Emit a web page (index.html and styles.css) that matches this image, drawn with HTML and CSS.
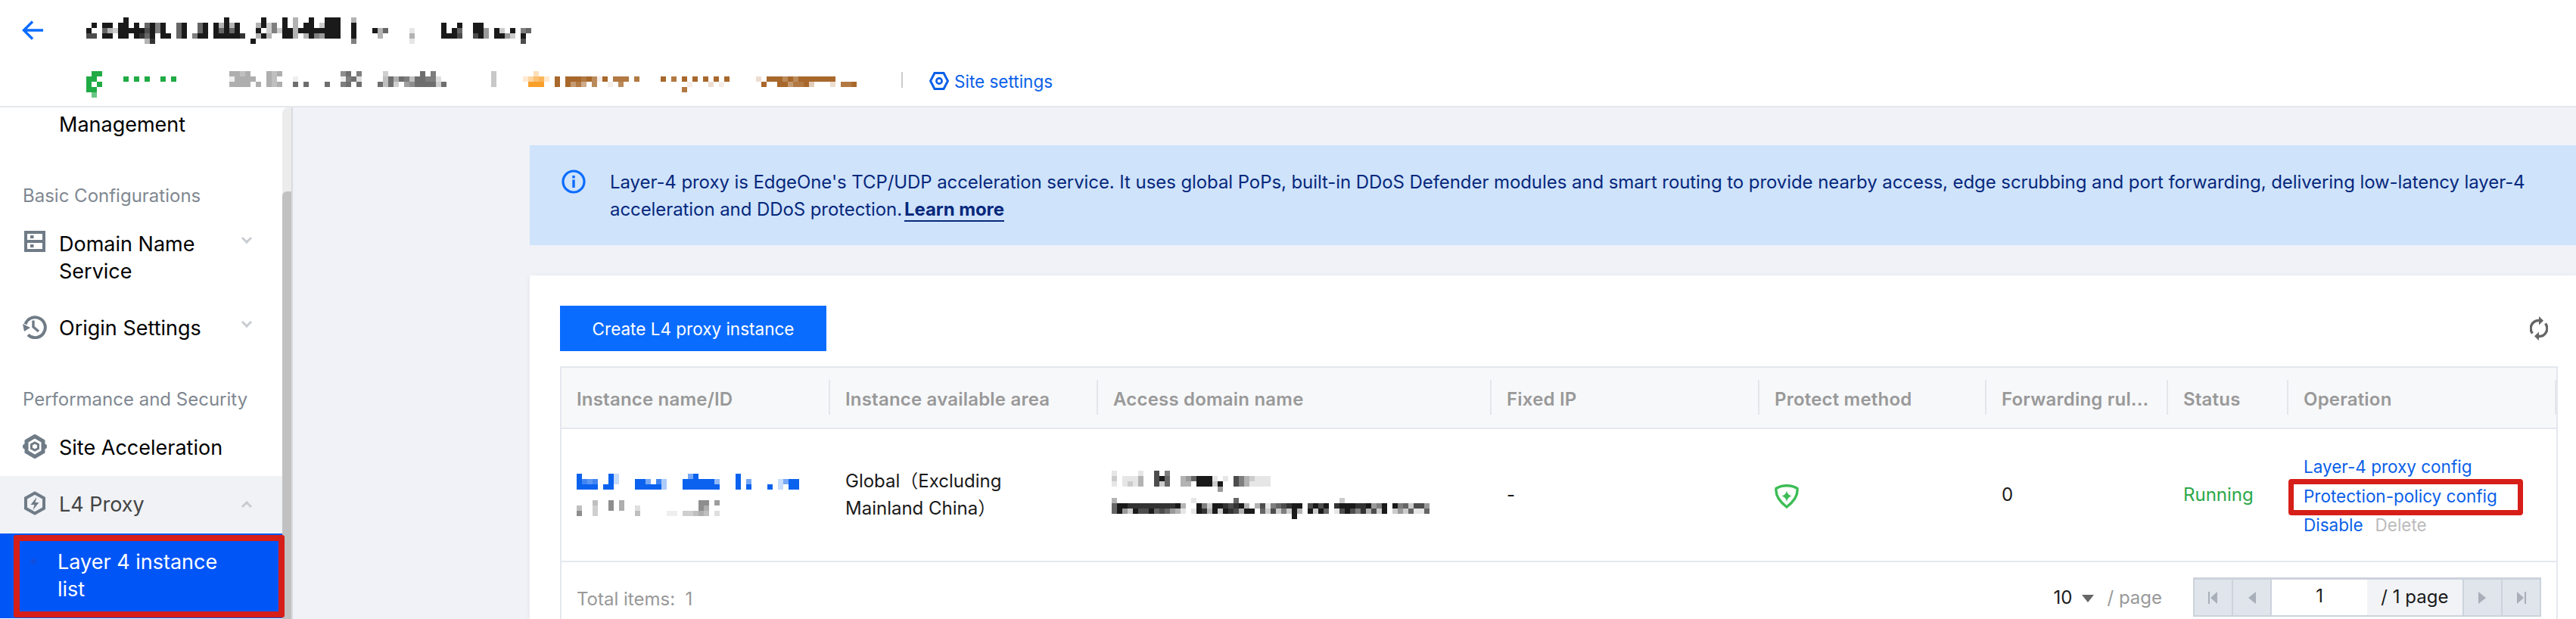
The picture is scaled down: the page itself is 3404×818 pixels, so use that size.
FILE: index.html
```html
<!DOCTYPE html>
<html lang="en">
<head>
    <meta charset="UTF-8">
    <meta name="viewport" content="width=device-width, initial-scale=1.0">
    <title>L4 Proxy</title>
    <link rel="stylesheet" href="styles.css">
</head>
<body>

<header class="topbar">
    <div class="title-row">
        <svg class="back-icon" viewBox="0 0 28 26" width="28" height="26"><path d="M28 13H3M14 1.5 2.5 13 14 24.5" fill="none" stroke="#0a6cff" stroke-width="3.4"/></svg>
        <div class="mosaic mosaic-dark" data-rows=".......9..................9......9...9.3..9.|.9.99.99.9.6959..69..69.93939...3925.9.3.99.|9..632999997959..69..69.96969...9.2529939999|77.99.99.9869.99.69.599.999998..393..993.395|...........38..................9"></div>
        <div class="mosaic mosaic-dark" data-rows=".999..3|2999..9................9..9..99|9999..9...936....1.....9.96..994.92.9.56|4999..9....3.....3.....9997..794.9942.9|......5..........1....................7"></div>
    </div>
    <div class="site-row">
        <div class="mosaic mosaic-green" data-rows=".99|99.....9.9.9..9.9|9.9|99|.6"></div>
        <div class="mosaic mosaic-gray" data-rows="5545...545...........79.8....3......9.8|15555..54...1........1892....49598499882|5555.5.545..9.9...9..89.9...9493.67999939"></div>
        <span class="mosaic-sep"></span>
        <div class="mosaic mosaic-orange" data-rows="..3..|24672|.999."></div>
        <div class="mosaic mosaic-brown" data-rows=".|9.99989719.888.8....9.8.9.9.9.9.9.....2.9997979999999|9.9685.7..1.7............1...2.1.......9..9968893...2.889|........................8"></div>
        <span class="site-sep"></span>
        <a class="site-link">
            <svg viewBox="0 0 26 24" width="26" height="24"><path d="M7 1.5h12L24.5 12 19 22.5H7L1.5 12z" fill="none" stroke="#0a5fe8" stroke-width="3"/><circle cx="13" cy="12" r="3.6" fill="none" stroke="#0a5fe8" stroke-width="2.6"/></svg>
            Site settings
        </a>
    </div>
</header>

<div class="layout">
    <aside class="sidebar">
        <nav class="side-nav">
            <div class="nav-item nav-first"><span class="nav-text">Management</span></div>

            <div class="nav-group">Basic Configurations</div>
            <div class="nav-item">
                <svg class="nav-icon" viewBox="0 0 28 28" width="28" height="28"><path fill-rule="evenodd" d="M0 0h28v28H0zM4 4v8h20V4zM4 16v8h20v-8z"/><path d="M8 6h4.5v4H8zM8 18h4.5v4H8z"/></svg>
                <span class="nav-text">Domain Name Service</span>
                <span class="chevron"></span>
            </div>
            <div class="nav-item">
                <svg class="nav-icon" viewBox="0 0 32 32" width="32" height="32"><path d="M3.5 12.5A13.5 13.5 0 1 1 7 26.5" fill="none" stroke="#6f7b86" stroke-width="4"/><path d="M0 12l10 5-8 5z"/><path d="M14 7.5V16l7 6" fill="none" stroke="#6f7b86" stroke-width="3.4"/></svg>
                <span class="nav-text">Origin Settings</span>
                <span class="chevron"></span>
            </div>

            <div class="nav-group">Performance and Security</div>
            <div class="nav-item">
                <svg class="nav-icon" viewBox="0 0 32 32" width="32" height="32"><path d="M16 2.5 27 9v14l-11 6.5L5 23V9z" fill="none" stroke="#6f7b86" stroke-width="5"/><path d="M16 11l4.5 2.5v5L16 21l-4.5-2.5v-5z" fill="none" stroke="#6f7b86" stroke-width="3"/><circle cx="3.5" cy="16" r="3.5"/><circle cx="28.5" cy="16" r="3.5"/></svg>
                <span class="nav-text">Site Acceleration</span>
            </div>
            <div class="nav-item nav-open">
                <svg class="nav-icon" viewBox="0 0 28 32" width="28" height="32"><path d="M14 2.5 26 9.200v13.600L14 29.500 2 22.800V9.200z" fill="none" stroke="#6f7b86" stroke-width="4"/><path d="M16.500 8 8.500 18h5l-2 7 8-10h-5z"/></svg>
                <span class="nav-text">L4 Proxy</span>
                <span class="chevron chevron-up"></span>
            </div>
            <div class="nav-sub">
                <span class="nav-dot"></span>
                <span class="nav-text">Layer 4 instance list</span>
                <span class="red-box"></span>
            </div>
        </nav>
        <div class="scrollbar"><div class="scroll-thumb"></div></div>
    </aside>

    <main class="content">
        <div class="banner">
            <svg class="banner-icon" viewBox="0 0 32 32" width="32" height="32"><circle cx="16" cy="16" r="14" fill="none" stroke="#0a6cff" stroke-width="3.2"/><path d="M14.300 13.500h3.400V24h-3.400zM14.300 8h3.400v3.400h-3.400z" fill="#0a6cff"/></svg>
            <p class="banner-text">Layer-4 proxy is EdgeOne's TCP/UDP acceleration service. It uses global PoPs, built-in DDoS Defender modules and smart routing to provide nearby access, edge scrubbing and port forwarding, delivering low-latency layer-4 acceleration and DDoS protection.<a class="banner-link">Learn more</a></p>
        </div>

        <section class="card">
            <div class="toolbar">
                <button class="btn-primary">Create L4 proxy instance</button>
                <svg class="refresh" viewBox="0 0 24 32" width="24" height="32"><path d="M3.500 22.500A10.500 10.500 0 0 1 12 5.500M20.500 9.500A10.500 10.500 0 0 1 12 26.500" fill="none" stroke="#666" stroke-width="3.4"/><path d="M12 0l6 5.800-6 5.700zM12 20.500l-6 5.800 6 5.700z" fill="#666"/></svg>
            </div>

            <div class="table-wrap">
                <table class="table">
                    <colgroup>
                        <col class="col-name"><col class="col-area"><col class="col-domain"><col class="col-ip">
                        <col class="col-protect"><col class="col-rules"><col class="col-status"><col class="col-ops">
                    </colgroup>
                    <thead>
                        <tr>
                            <th><div class="th-in">Instance name/ID</div></th>
                            <th><div class="th-in">Instance available area</div></th>
                            <th><div class="th-in">Access domain name</div></th>
                            <th><div class="th-in">Fixed IP</div></th>
                            <th><div class="th-in">Protect method</div></th>
                            <th><div class="th-in">Forwarding rul...</div></th>
                            <th><div class="th-in">Status</div></th>
                            <th><div class="th-in th-last">Operation</div></th>
                        </tr>
                    </thead>
                    <tbody>
                        <tr>
                            <td>
                                <div class="mosaic mosaic-blue mosaic-line" data-rows="9.....92.............59.......9|9767..92...995.73...9999994...9.5.....2599|9999.99....999993...9999999...9.9...9.2.99"></div>
                                <div class="mosaic mosaic-gray" data-rows="...4..7.5..............77.6|4..3..7.5..2...........75|7..3.......4.....11.33454.2"></div>
                            </td>
                            <td>Global（Excluding<br>Mainland China）</td>
                            <td class="cell-domain">
                                <div class="mosaic mosaic-dark mosaic-line-sm" data-rows="1....1..7.5|2.1113..796..3469991.1.7532111|1.1213..726..33.99929..7531111|....................4"></div>
                                <div class="mosaic mosaic-dark" data-rows="3..............1.......6...................2|69988888888893..9529987893.371567899.7979.8999889459.9562774|69429779676431.198392987399.62725293.9296.1797583729.2426116|..................................9"></div>
                            </td>
                            <td>-</td>
                            <td>
                                <svg class="shield" viewBox="0 0 32 32" width="32" height="32"><path d="M16 1.800Q24 1.800 30 5.500 31.500 18 16 30 .5 18 2 5.500 8 1.800 16 1.800z" fill="none" stroke="#3cbd55" stroke-width="3.4"/><path d="M16 8.500Q17 14 22.500 15.500 17 17 16 23 15 17 9.500 15.500 15 14 16 8.500z" fill="#3cbd55"/></svg>
                            </td>
                            <td>0</td>
                            <td class="status-run">Running</td>
                            <td class="cell-ops">
                                <a class="op-link">Layer-4 proxy config</a>
                                <a class="op-link op-marked">Protection-policy config<span class="red-box-op"></span></a>
                                <div><a class="op-link op-inline">Disable</a><span class="op-off">Delete</span></div>
                            </td>
                        </tr>
                    </tbody>
                </table>

                <div class="table-foot">
                    <span class="total">Total items:&nbsp; 1</span>
                    <div class="page-size"><span class="size-val">10</span><span class="caret"></span><span class="size-unit">/ page</span></div>
                    <div class="pager">
                        <span class="pg-btn"><svg viewBox="0 0 14 16" width="14" height="16"><path d="M0 0h2v16H0zM12 0v16L3 8z"/></svg></span>
                        <span class="pg-btn"><svg viewBox="0 0 10 16" width="10" height="16"><path d="M10 0v16L0 8z"/></svg></span>
                        <span class="pg-input">1</span>
                        <span class="pg-count">/ 1 page</span>
                        <span class="pg-btn"><svg viewBox="0 0 10 16" width="10" height="16"><path d="M0 0v16l10-8z"/></svg></span>
                        <span class="pg-btn"><svg viewBox="0 0 14 16" width="14" height="16"><path d="M2 0v16l9-8zM12 0h2v16h-2z"/></svg></span>
                    </div>
                </div>
            </div>
        </section>
    </main>
</div>

<script src="mosaic.js"></script>
</body>
</html>
```

FILE: styles.css
```css
/* Base */
html, body {
    height: 100%;
}

body {
    margin: 0;
    display: flex;
    flex-direction: column;
    overflow: hidden;
    font-family: Inter, "Noto Sans CJK SC", sans-serif;
    font-size: 24px;
    color: #1a1a1a;
    background-color: #f0f2f7;
}

/* Blurred-out text blocks */
.mosaic svg {
    display: block;
}

.mosaic-dark { fill: #1a1a1a; }
.mosaic-gray { fill: #6e6e6e; }
.mosaic-green { fill: #20ab45; }
.mosaic-orange { fill: #f9a02a; }
.mosaic-brown { fill: #a8682c; }
.mosaic-blue { fill: #0a62ee; }

/* Top bar */
.topbar {
    height: 140px;
    padding-top: 23px;
    box-sizing: border-box;
    flex-shrink: 0;
    background-color: #fff;
}

.title-row {
    display: flex;
    align-items: flex-start;
    height: 35px;
    padding-left: 29px;
}

.back-icon {
    margin: 4px 57px 0 0;
}

.site-row {
    display: flex;
    align-items: flex-start;
    margin-top: 36px;
    padding-left: 114px;
}

.site-row .mosaic-gray {
    margin-left: 70px;
}

.mosaic-sep {
    width: 7px;
    height: 21px;
    margin: 0 35px 0 59px;
    background-color: #c8c8c8;
}

.site-row .mosaic-brown {
    margin-left: 7px;
}

.site-sep {
    width: 2px;
    height: 21px;
    margin: 1px 35px 0 59px;
    background-color: #ccc;
}

.site-link {
    display: flex;
    align-items: center;
    gap: 7px;
    height: 26px;
    color: #0a5fe8;
    font-size: 22.5px;
}

/* Page body */
.layout {
    flex: 1;
    display: flex;
    min-height: 0;
    border-top: 2px solid #e4e7ec;
}

/* Sidebar */
.sidebar {
    display: flex;
    width: 387px;
    flex-shrink: 0;
    overflow: hidden;
    box-sizing: border-box;
    border-right: 2px solid #d8dbe0;
    background-color: #fff;
}

.side-nav {
    width: 373px;
    flex-shrink: 0;
    padding-top: 5px;
    box-sizing: border-box;
    font-size: 27px;
    line-height: 36px;
    color: #000;
}

.scrollbar {
    width: 12px;
    padding-top: 111px;
    box-sizing: border-box;
    border-top-left-radius: 8px;
    background-color: #ececec;
}

.scroll-thumb {
    height: 100%;
    border-radius: 6px 0 0 0;
    background-color: #c1c1c1;
}

.nav-item {
    display: flex;
    align-items: flex-start;
    padding: 20px 42px 20px 30px;
    fill: #6f7b86;
}

.nav-first {
    padding-top: 0;
    padding-left: 78px;
}

.nav-icon {
    width: 32px;
    margin-right: 16px;
    flex-shrink: 0;
}

.nav-text {
    flex: 1;
}

.nav-group {
    margin-top: 30px;
    padding-left: 30px;
    height: 52px;
    line-height: 52px;
    font-size: 24px;
    color: #7f8891;
}

.nav-group + .nav-item {
    margin-bottom: -1px;
}

.nav-open {
    color: #444;
    background-color: #f0f2f5;
}

.chevron {
    width: 7px;
    height: 7px;
    margin-top: 5px;
    border-right: 3px solid #c8ccd1;
    border-bottom: 3px solid #c8ccd1;
    transform: rotate(45deg);
}

.chevron-up {
    margin-top: 15px;
    transform: rotate(225deg);
}

.nav-sub {
    position: relative;
    display: flex;
    padding: 20px 70px 20px 76px;
    color: #fff;
    background-color: #0055f7;
}

.nav-dot {
    position: absolute;
    left: 40px;
    top: 33px;
    width: 8px;
    height: 8px;
    border-radius: 50%;
    background-color: #0f4fe0;
}

.red-box {
    position: absolute;
    left: 18px;
    right: -3px;
    top: 2px;
    bottom: 1px;
    border: 8px solid #d61f18;
    border-radius: 3px;
}

/* Content */
.content {
    flex: 1;
    min-width: 0;
    padding: 50px 0 0 313px;
}

.banner {
    display: flex;
    align-items: flex-start;
    gap: 32px;
    padding: 31px 40px 29px 42px;
    background-color: #cfe3fb;
}

.banner-icon {
    flex-shrink: 0;
    margin-top: 1px;
}

.banner-text {
    margin: 0;
    line-height: 36px;
    letter-spacing: -0.08px;
    color: #06287c;
}

.banner-link {
    margin-left: 3px;
    font-weight: 700;
    border-bottom: 2px solid #06287c;
}

.card {
    height: 454px;
    margin-top: 40px;
    padding: 40px 24px 0 40px;
    box-sizing: border-box;
    background-color: #fff;
    box-shadow: 0 2px 8px rgba(0, 0, 0, 0.06);
}

.toolbar {
    display: flex;
    align-items: center;
    justify-content: space-between;
    padding-right: 13px;
}

.btn-primary {
    width: 352px;
    height: 60px;
    padding: 0;
    border: none;
    color: #fff;
    font-family: inherit;
    font-size: 22.5px;
    background-color: #0a6cff;
}

/* Table */
.table-wrap {
    margin-top: 20px;
    border: 2px solid #e4e8ee;
}

.table {
    width: 100%;
    table-layout: fixed;
    border-collapse: collapse;
}

.col-name { width: 353px; }
.col-area { width: 354px; }
.col-domain { width: 520px; }
.col-ip { width: 354px; }
.col-protect { width: 300px; }
.col-rules { width: 240px; }
.col-status { width: 159px; }

th {
    padding: 16px 0 17px;
    text-align: left;
    font-weight: 600;
    letter-spacing: 0.2px;
    color: #999;
    background-color: #f7f8fa;
    border-bottom: 2px solid #e4e8ee;
}

.th-in {
    height: 46px;
    line-height: 51px;
    padding-left: 20px;
    border-left: 2px solid #e4e6ea;
    white-space: nowrap;
}

th:first-child .th-in {
    border-left: none;
}

.th-last {
    border-right: 2px solid #e4e6ea;
}

td {
    height: 170px;
    padding: 0 0 0 22px;
    line-height: 36px;
    border-bottom: 2px solid #e4e8ee;
}

td:first-child {
    padding-left: 20px;
}

.cell-domain {
    padding-left: 20px;
}

.mosaic-line {
    margin-bottom: 14px;
}

.mosaic-line-sm {
    margin-bottom: 8px;
}

.shield {
    display: block;
    margin-top: 3px;
}

.status-run {
    color: #2ba84a;
}

.cell-ops {
    padding-top: 4px;
    font-size: 22.5px;
    line-height: 38.5px;
}

.op-link {
    display: block;
    color: #0a5fe8;
}

.op-inline {
    display: inline;
    margin-right: 16px;
}

.op-marked {
    position: relative;
}

.red-box-op {
    position: absolute;
    left: -20px;
    top: -4px;
    width: 310px;
    height: 48px;
    box-sizing: border-box;
    border: 7px solid #d61f18;
    border-radius: 4px;
}

.op-off {
    color: #bbb;
}

/* Table footer */
.table-foot {
    display: flex;
    align-items: flex-start;
    padding: 20px 20px 0;
}

.total {
    flex: 1;
    line-height: 58px;
    color: #999;
}

.page-size {
    display: flex;
    align-items: center;
    height: 52px;
    margin-right: 41px;
}

.size-val {
    color: #1a1a1a;
}

.caret {
    width: 0;
    height: 0;
    margin: 4px 17px 0 13px;
    border-left: 8px solid transparent;
    border-right: 8px solid transparent;
    border-top: 10px solid #666;
}

.size-unit {
    color: #999;
}

.pager {
    display: flex;
    width: 460px;
    height: 52px;
    box-sizing: border-box;
    border: 2px solid #cdd3dc;
    border-top-width: 3px;
}

.pg-btn {
    display: flex;
    align-items: center;
    justify-content: center;
    width: 50px;
    border-right: 2px solid #cdd3dc;
    background-color: #e0e5ec;
    fill: #a9afb8;
}

.pg-btn:last-child {
    border-right: none;
}

.pg-input {
    width: 128px;
    line-height: 44px;
    text-align: center;
    background-color: #fff;
}

.pg-count {
    width: 130px;
    line-height: 46px;
    text-align: center;
    background-color: #f1f3f6;
    border-right: 2px solid #cdd3dc;
    box-sizing: border-box;
}
```

FILE: mosaic.js
```js
// Turn data-rows into blocks of 7px cells. A digit is how dark the cell is, a dot is empty.
const CELL = 7;
const SVG_NS = "http://www.w3.org/2000/svg";

document.querySelectorAll(".mosaic").forEach(function (el) {
    const rows = el.dataset.rows.split("|");
    const cols = Math.max.apply(null, rows.map(r => r.length));
    const svg = document.createElementNS(SVG_NS, "svg");
    svg.setAttribute("width", cols * CELL);
    svg.setAttribute("height", rows.length * CELL);
    svg.setAttribute("shape-rendering", "crispEdges");

    rows.forEach(function (row, y) {
        row.split("").forEach(function (ch, x) {
            if (ch === ".") return;
            const rect = document.createElementNS(SVG_NS, "rect");
            rect.setAttribute("x", x * CELL);
            rect.setAttribute("y", y * CELL);
            rect.setAttribute("width", CELL);
            rect.setAttribute("height", CELL);
            rect.setAttribute("opacity", Number(ch) / 9);
            svg.appendChild(rect);
        });
    });

    el.appendChild(svg);
});
```
